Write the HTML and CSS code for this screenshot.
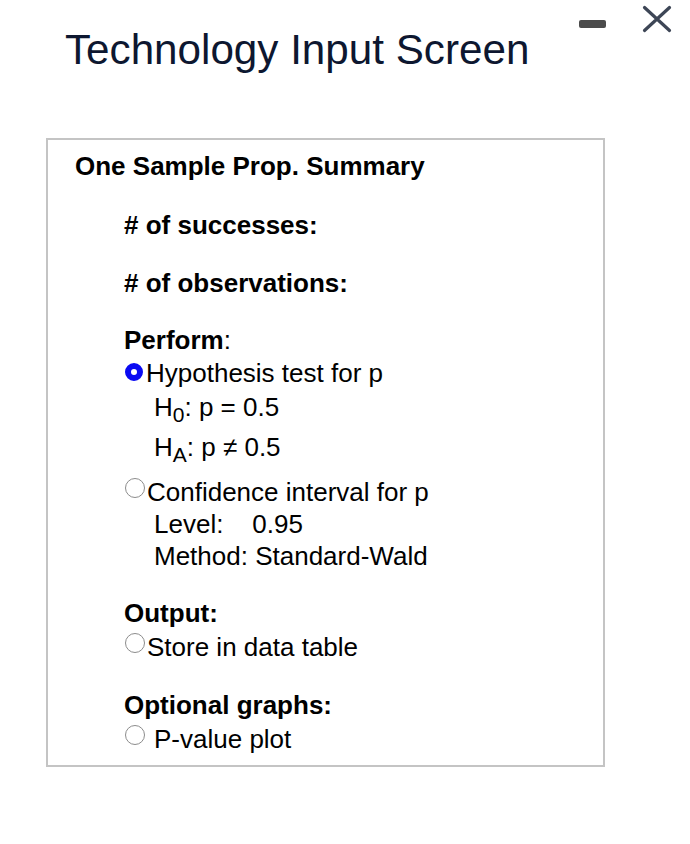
FILE: index.html
```html
<!DOCTYPE html>
<html lang="en">
<head>
  <meta charset="UTF-8">
  <meta name="viewport" content="width=device-width, initial-scale=1.0">
  <title>Technology Input Screen</title>
  <link rel="stylesheet" href="styles.css">
</head>
<body>

  <!-- Top bar -->
  <div class="top-bar">
    <h1 class="screen-title">Technology Input Screen</h1>
    <div class="window-buttons">
      <span class="btn-minimize"></span>
      <svg class="btn-close" width="30" height="28" viewBox="0 0 30 28">
        <path d="M2.5 2.5 L27.5 25.5 M27.5 2.5 L2.5 25.5" />
      </svg>
    </div>
  </div>

  <!-- Input panel -->
  <div class="panel">
    <div class="panel-title">One Sample Prop. Summary</div>

    <div class="panel-body">
      <div class="field field-first">
        <div class="label-bold"># of successes:</div>
      </div>

      <div class="field">
        <div class="label-bold"># of observations:</div>
      </div>

      <div class="field field-perform">
        <div class="section-label"><b>Perform</b>:</div>

        <div class="option">
          <span class="radio radio-checked"></span>
          <span class="option-text">Hypothesis test for p</span>
        </div>
        <div class="sub-row sub-row-null">H<sub>0</sub>: p = 0.5</div>
        <div class="sub-row sub-row-alt">H<sub>A</sub>: p ≠ 0.5</div>

        <div class="option option-gap">
          <span class="radio"></span>
          <span class="option-text">Confidence interval for p</span>
        </div>
        <div class="sub-row sub-row-level">Level:&nbsp;&nbsp;&nbsp; 0.95</div>
        <div class="sub-row">Method: Standard-Wald</div>
      </div>

      <div class="field field-output">
        <div class="label-bold">Output:</div>
        <div class="option option-store">
          <span class="radio"></span>
          <span class="option-text">Store in data table</span>
        </div>
      </div>

      <div class="field">
        <div class="label-bold">Optional graphs:</div>
        <div class="option">
          <span class="radio radio-spaced"></span>
          <span class="option-text">P-value plot</span>
        </div>
      </div>
    </div>
  </div>

</body>
</html>
```

FILE: styles.css
```css
* {
  margin: 0;
  padding: 0;
  box-sizing: border-box;
  font-family: "Liberation Sans", Arial, sans-serif;
}

body {
  background-color: white;
  color: #000;
}

/* Top bar */
.top-bar {
  display: flex;
  justify-content: space-between;
  align-items: flex-start;
  padding: 5px 18px 0 65px;
}

.screen-title {
  margin-top: 21px;
  font-size: 42.2px;
  font-weight: normal;
  line-height: 48px;
  color: #0d1730;
}

.window-buttons {
  display: flex;
  align-items: flex-start;
  gap: 36px;
}

.btn-minimize {
  display: block;
  width: 27px;
  height: 8px;
  margin-top: 15px;
  border-radius: 2px;
  background-color: #4b4b4b;
}

.btn-close path {
  fill: none;
  stroke: #3d4656;
  stroke-width: 3.2;
  stroke-linecap: round;
}

/* Panel */
.panel {
  width: 559px;
  margin: 64px 0 0 46px;
  border: 2px solid #c4c4c4;
  padding: 10px 0 9px 27px;
}

.panel-title,
.label-bold {
  font-size: 26px;
  font-weight: bold;
  line-height: 33px;
}

.panel-body {
  padding-left: 49px;
}

.field {
  margin-top: 25px;
}

.field-first {
  margin-top: 26px;
}

.field-perform {
  margin-top: 24px;
}

.field-output {
  margin-top: 25px;
}

.section-label {
  font-size: 26px;
  line-height: 33px;
}

.option {
  display: flex;
  align-items: flex-start;
  font-size: 26px;
  line-height: 33px;
}

.option-gap {
  margin-top: 11px;
}

.field .label-bold + .option {
  margin-top: 1px;
}

.field .option-store {
  margin-top: 4px;
}

.radio {
  flex-shrink: 0;
  width: 20px;
  height: 20px;
  margin: 2px 2px 0 1px;
  border: 1.5px solid #8c8c8c;
  border-radius: 50%;
}

.radio-checked {
  width: 18px;
  height: 18px;
  margin: 6px 3px 0 1px;
  border: 6px solid #0a0af2;
  background-color: white;
}

.radio-spaced {
  margin-right: 9px;
}

.sub-row {
  padding-left: 30px;
  font-size: 26px;
  line-height: 32px;
}

.sub-row sub {
  font-size: 21px;
  line-height: 1;
  vertical-align: -6px;
}

.sub-row-null {
  margin-top: 1px;
}

.sub-row-alt {
  margin-top: 6px;
}

.sub-row-level {
  margin-top: -1px;
}
```
